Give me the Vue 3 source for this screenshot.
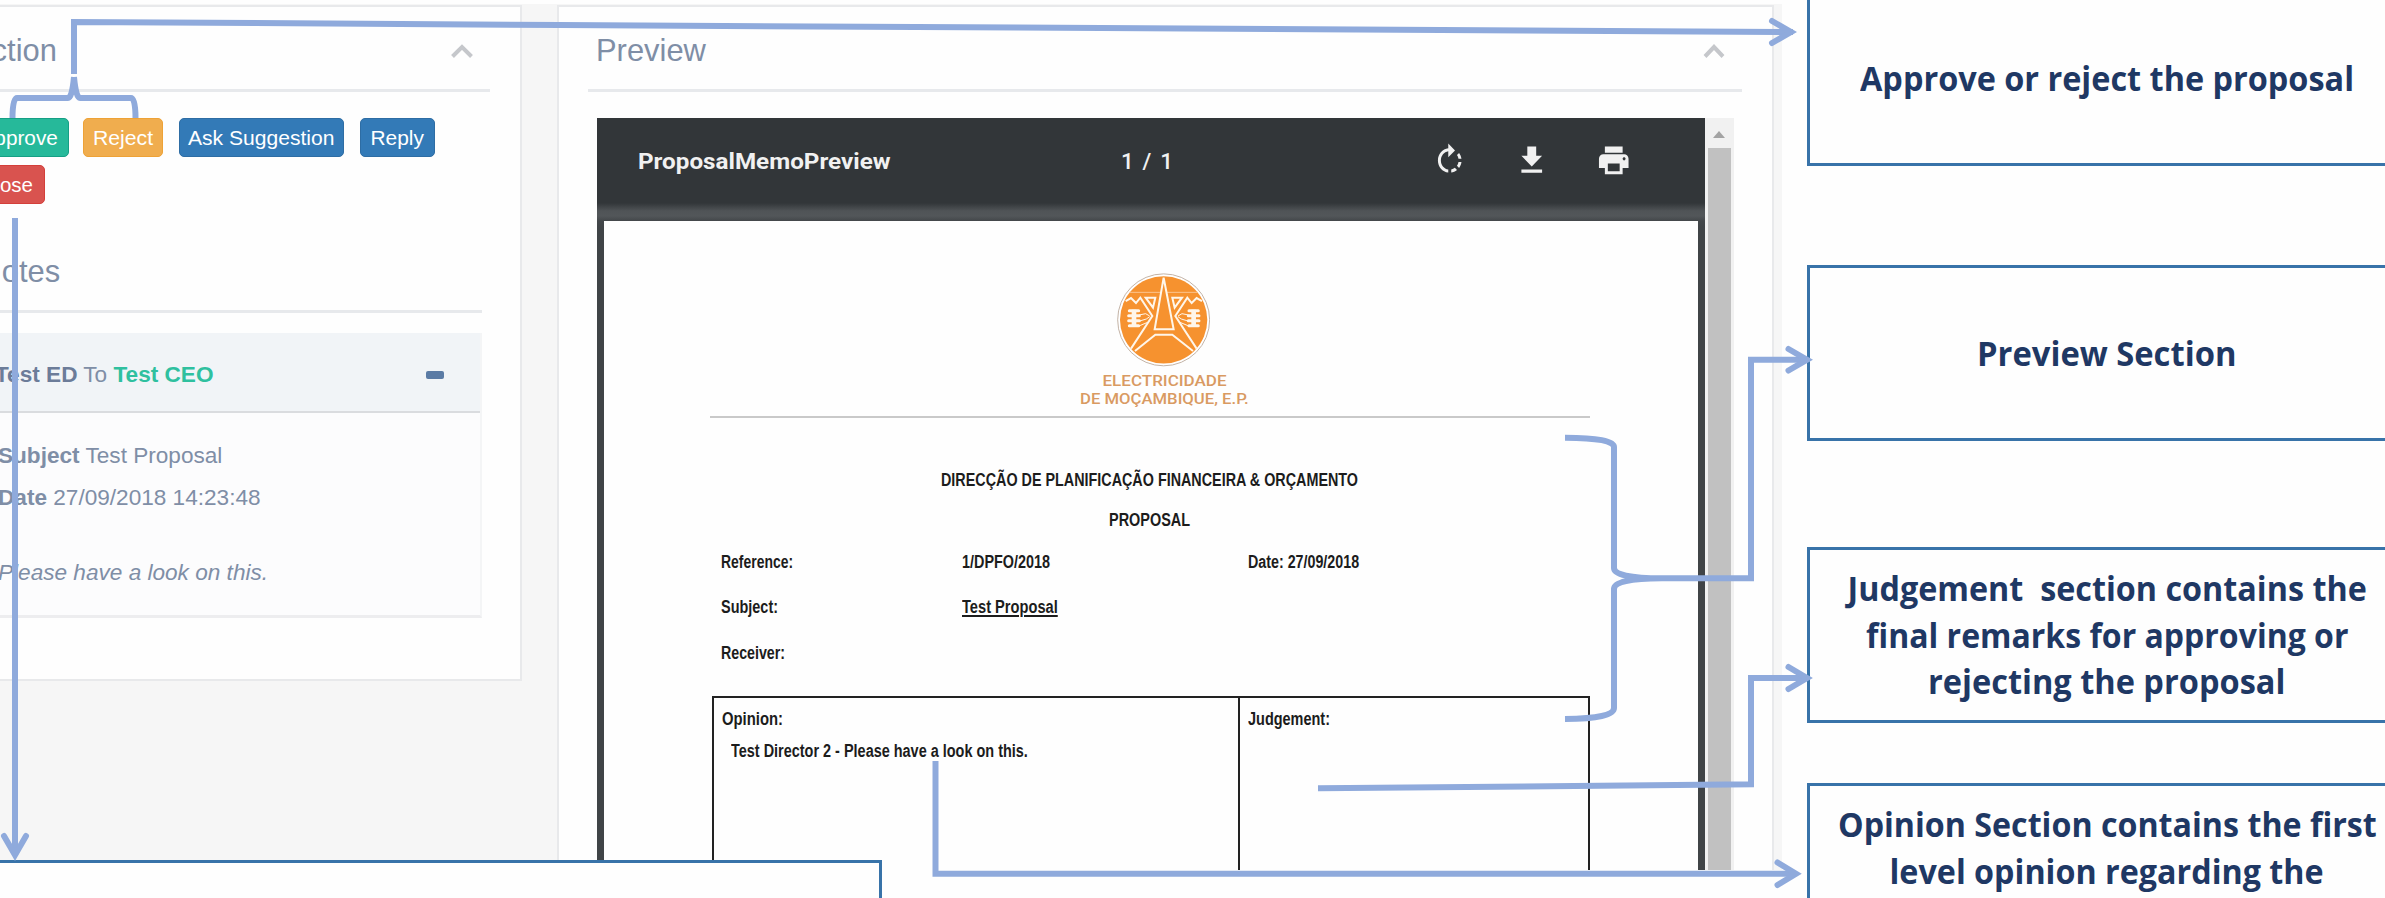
<script setup>
// Stretches or condenses a text run horizontally to the given width.
const vFit = {
  mounted(el, { value }) {
    el.style.transform = `scaleX(${value / el.offsetWidth})`
  },
}

const memoRows = [
  { label: 'Reference:', lw: 72, value: '1/DPFO/2018', vw: 88, extra: 'Date: 27/09/2018', ew: 111 },
  { label: 'Subject:', lw: 57, value: 'Test Proposal', vw: 96, underline: true },
  { label: 'Receiver:', lw: 64 },
]

const callouts = [
  { id: 'approve', lines: [['Approve or reject the proposal', 494]] },
  { id: 'preview', lines: [['Preview Section', 259]] },
  {
    id: 'judgement',
    lines: [
      ['Judgement\u00a0 section contains the', 519],
      ['final remarks for approving or', 482],
      ['rejecting the proposal', 357],
    ],
  },
  {
    id: 'opinion',
    lines: [
      ['Opinion Section contains the first', 539],
      ['level opinion regarding the', 434],
    ],
  },
]
</script>

<template>
  <div class="slide">
    <div class="app">
      <section class="panel side">
        <header class="panel-head">
          <h2 class="action-title">Action</h2>
          <svg class="chev" width="24" height="16" viewBox="0 0 24 16"><path d="M2.500 13.500 12 4l9.500 9.500" /></svg>
        </header>
        <div class="buttons">
          <button class="btn approve"><span v-fit="77">Approve</span></button>
          <button class="btn reject"><span v-fit="60">Reject</span></button>
          <button class="btn ask"><span v-fit="146">Ask Suggestion</span></button>
          <button class="btn reply"><span v-fit="53">Reply</span></button>
        </div>
        <button class="btn close"><span>Close</span></button>
        <h2 class="notes-title">Notes</h2>
        <article class="note">
          <header class="note-head">
            <span class="route"><b>Test ED</b> To <b class="to">Test CEO</b></span>
            <i class="minus"></i>
          </header>
          <div class="note-body">
            <p><b>Subject</b> Test Proposal</p>
            <p><b>Date</b> 27/09/2018 14:23:48</p>
            <p class="remark">Please have a look on this.</p>
          </div>
        </article>
      </section>

      <section class="panel preview">
        <header class="panel-head">
          <h2>Preview</h2>
          <svg class="chev" width="24" height="16" viewBox="0 0 24 16"><path d="M3 13.500 12 4l9 9.500" /></svg>
        </header>
        <div class="viewer">
          <div class="viewer-main">
            <div class="toolbar">
              <span class="file" v-fit="253">ProposalMemoPreview</span>
              <span class="pages">1 / 1</span>
              <div class="tools">
                <svg viewBox="0 0 24 24" preserveAspectRatio="none"><path d="M15.55 5.55L11 1v3.07C7.06 4.56 4 7.92 4 12s3.05 7.44 7 7.93v-2.02c-2.84-.48-5-2.94-5-5.91s2.16-5.43 5-5.91V10l4.55-4.45zM19.93 11c-.17-1.39-.72-2.73-1.62-3.89l-1.42 1.42c.54.75.88 1.6 1.02 2.47h2.02zM13 17.9v2.02c1.39-.17 2.74-.71 3.9-1.61l-1.44-1.44c-.75.54-1.59.89-2.46 1.03zm3.89-2.42l1.42 1.41c.9-1.16 1.45-2.5 1.62-3.89h-2.02c-.14.87-.48 1.72-1.02 2.48z" /></svg>
                <svg viewBox="0 0 24 24" preserveAspectRatio="none"><path d="M19 9h-4V3H9v6H5l7 7 7-7zM5 18v2h14v-2H5z" /></svg>
                <svg viewBox="0 0 24 24" preserveAspectRatio="none"><path d="M19 8H5c-1.66 0-3 1.34-3 3v6h4v4h12v-4h4v-6c0-1.66-1.34-3-3-3zm-3 11H8v-5h8v5zm3-7c-.55 0-1-.45-1-1s.45-1 1-1 1 .45 1 1-.45 1-1 1zm-1-9H6v4h12V3z" /></svg>
              </div>
            </div>
            <div class="page">
              <div class="brand">
                <svg class="logo" viewBox="230 68 280 281">
                  <circle cx="370" cy="208.500" r="138" fill="#fff" stroke="#c3b3a6" stroke-width="3" />
                  <circle cx="370" cy="208.500" r="131" fill="#f6922f" />
                  <path d="M268 126H472" stroke="#fbc48f" stroke-width="3" />
                  <g fill="none" stroke="#fff6ea" stroke-width="6" stroke-linejoin="miter">
                    <path d="M370 82 343 237H400Z" fill="#f6922f" />
                    <path d="M284 302 345 253H396L458 302" />
                    <g v-for="side in ['', 'translate(741 0) scale(-1 1)']" :key="side" :transform="side">
                      <path d="M256 152 272 143 287 158 300 142 336 197 272 295" />
                      <path d="M316 142H345L338 172Z" />
                      <path d="M296 194 316 190 328 197M298 212 318 206 328 199M298 226 322 216" stroke-width="3" />
                      <path d="M267 181H295M265 196H297M265 211H297M267 226H295" stroke-width="9" stroke-linecap="round" />
                      <path d="M281 178V230" stroke-width="14" />
                    </g>
                  </g>
                </svg>
                <span v-fit="124">ELECTRICIDADE</span>
                <span v-fit="169">DE MOÇAMBIQUE, E.P.</span>
              </div>
              <hr class="rule" />
              <div class="memo-title">
                <span v-fit="417">DIRECÇÃO DE PLANIFICAÇÃO FINANCEIRA &amp; ORÇAMENTO</span>
                <span v-fit="81">PROPOSAL</span>
              </div>
              <div v-for="row in memoRows" :key="row.label" class="memo-row">
                <div><span v-fit="row.lw">{{ row.label }}</span></div>
                <div><span v-if="row.value" v-fit="row.vw" :class="{ under: row.underline }">{{ row.value }}</span></div>
                <div><span v-if="row.extra" v-fit="row.ew">{{ row.extra }}</span></div>
              </div>
              <div class="memo-table">
                <div class="cell">
                  <div><span v-fit="61">Opinion:</span></div>
                  <div class="entry"><span v-fit="297">Test Director 2 - Please have a look on this.</span></div>
                </div>
                <div class="cell">
                  <div><span v-fit="82">Judgement:</span></div>
                </div>
              </div>
            </div>
          </div>
          <div class="scroll">
            <i class="up"></i>
            <div class="thumb"></div>
          </div>
        </div>
      </section>
    </div>

    <aside class="callouts">
      <div v-for="c in callouts" :key="c.id" class="callout" :class="c.id">
        <span v-for="line in c.lines" :key="line[0]" v-fit="line[1]">{{ line[0] }}</span>
      </div>
    </aside>

    <div class="lower-box"></div>

    <svg class="connectors" width="2385" height="898" viewBox="0 0 2385 898">
      <!-- approve / reject -->
      <path d="M74 74V22L560 25 1793 32" />
      <path d="M12.500 118Q12.500 98 17 98H68Q72 98 74 77" />
      <path d="M135.500 118Q135.500 98 131 98H80Q76 98 74 77" />
      <path class="head" d="M1772 21 1791 32 1772 43" />
      <!-- close -->
      <path d="M15 218V852" />
      <path class="head" d="M4 836 15 855 26 836" />
      <!-- preview bracket -->
      <path d="M1565 437.700Q1614 438 1614 447V568Q1614 578 1662 578.300Q1614 578.600 1614 589V708Q1614 718.500 1565 719" />
      <path d="M1662 578.300H1751V359.700H1806" />
      <path class="head" d="M1788.500 349 1807 359.700 1788.500 370.500" />
      <!-- judgement -->
      <path d="M1318 788.300 1751 784.300V678H1806" />
      <path class="head" d="M1788.500 667 1807 678 1788.500 689" />
      <!-- opinion -->
      <path d="M935.500 761V873.700H1795" />
      <path class="head" d="M1777.500 862.500 1796 873.700 1777.500 885" />
    </svg>
  </div>
</template>

<style>
body {
  margin: 0;
  overflow: hidden;
}
</style>

<style scoped>
.slide {
  position: relative;
  display: flex;
  width: 2385px;
  height: 898px;
  overflow: hidden;
  background: #fefefe;
  font-family: "Liberation Sans", Arial, sans-serif;
  color: #7f8ea6;
}
.slide * {
  box-sizing: border-box;
}
.slide span {
  white-space: nowrap;
}
h2,
p {
  margin: 0;
  font-weight: 400;
}
.app {
  display: flex;
  align-items: flex-start;
  gap: 35px;
  flex: none;
  width: 1782px;
  height: 866px;
  margin-top: 4px;
  padding-top: 1px;
  overflow: hidden;
  background: #f6f6f6;
}
.panel {
  flex: none;
  border: 2px solid #e8e9eb;
  background: #fefefe;
}
.side {
  width: 522px;
  height: 676px;
  border-left: 0;
}
.preview {
  width: 1217px;
  height: 900px;
}
.panel-head {
  display: flex;
  align-items: center;
  justify-content: space-between;
  height: 85px;
  margin-right: 30px;
  padding: 6px 16px 0 0;
  border-bottom: 3px solid #e7e9ec;
}
.preview .panel-head {
  margin: 0 30px 0 29px;
  padding-left: 8px;
}
.panel-head h2,
.notes-title {
  font-size: 30.900px;
  line-height: 36px;
}
.action-title {
  margin-left: -29px;
}
.chev {
  margin-top: -1px;
  fill: none;
  stroke: #c5c7cb;
  stroke-width: 4;
}
.buttons {
  display: flex;
  gap: 16px;
  margin: 26px 0 0 -30px;
}
.btn {
  display: flex;
  align-items: center;
  justify-content: center;
  height: 39px;
  padding: 1px 0 0;
  border: 1px solid #2e6da4;
  border-radius: 5px;
  background: #337ab7;
  color: #fff;
  font: 20.500px "Liberation Sans", Arial, sans-serif;
}
.approve {
  width: 99px;
  margin-right: -2px;
  border-color: #169f85;
  background: #26b99a;
}
.reject {
  width: 80px;
  border-color: #eea236;
  background: #f0ad4e;
}
.ask {
  width: 165px;
}
.reply {
  width: 75px;
}
.close {
  width: 75.500px;
  margin: 8px 0 0 -31px;
  border-color: #d43f3a;
  background: #d9534f;
}
.notes-title {
  height: 109px;
  margin: 0 38px 0 0;
  padding-top: 50px;
  border-bottom: 3px solid #e7e9ec;
  text-indent: -20.500px;
}
.note {
  width: 482px;
  margin-top: 20px;
  border-right: 2px solid #f4f5f6;
  border-bottom: 3px solid #ededef;
  background: #fcfcfd;
  font-size: 22.600px;
}
.note-head {
  display: flex;
  align-items: center;
  justify-content: space-between;
  height: 80px;
  padding: 6px 36px 0 0;
  border-bottom: 2px solid #dadcdf;
  background: #f1f4f7;
}
.route {
  margin-left: -5px;
}
.route b {
  color: #6c7c99;
}
.route .to {
  color: #2fc09f;
}
.minus {
  width: 18px;
  height: 8px;
  border-radius: 2px;
  background: #5b7ba5;
}
.note-body {
  height: 202px;
  padding-top: 22px;
}
.note-body p {
  margin-left: -2px;
  line-height: 41.700px;
}
.note-body .remark {
  margin-top: 34px;
  font-style: italic;
}
.viewer {
  display: flex;
  width: 1136.500px;
  height: 760px;
  margin: 26px 0 0 38px;
}
.viewer-main {
  width: 1107.500px;
  overflow: hidden;
  background: linear-gradient(#323639 85px, #505457 93px, #525659 98px, #43474a 103px, #404447 110px);
}
.toolbar {
  display: flex;
  align-items: center;
  height: 85px;
  padding-left: 41px;
  color: #f1f1f1;
  font-family: Roboto, sans-serif;
  font-size: 22.500px;
  font-weight: 500;
}
.file {
  margin-top: 1px;
  font-weight: 700;
  transform-origin: left;
}
.pages {
  flex: none;
  width: 54px;
  margin-left: auto;
  margin-right: 257px;
  letter-spacing: 1.600px;
}
.tools {
  display: flex;
  gap: 46.500px;
  margin-right: 73px;
}
.tools svg {
  width: 35.500px;
  height: 36.800px;
  fill: #f1f1f1;
}
.page {
  height: 660px;
  margin: 18px 7px 0 6.500px;
  padding: 52px 108px 0 106.500px;
  background: #fefefe;
  color: #1c1c1c;
  font-size: 18px;
  font-weight: 700;
}
.brand {
  display: flex;
  flex-direction: column;
  align-items: center;
  padding-left: 30px;
  color: #d99a62;
  font: 500 15.500px/18px Roboto, sans-serif;
}
.logo {
  width: 93.300px;
  height: 93.700px;
  margin: 0 3px 5px 0;
}
.rule {
  height: 2px;
  margin: 8px 0 42px;
  border: 0;
  background: #c9c9c9;
}
.memo-title {
  display: flex;
  flex-direction: column;
  align-items: center;
  line-height: 40px;
}
.memo-row {
  display: grid;
  grid-template-columns: 241px 286px 1fr;
  height: 45.500px;
  padding-left: 11px;
  line-height: 45.500px;
}
.memo-row span,
.cell span {
  display: inline-block;
  transform-origin: left;
}
.under {
  text-decoration: underline;
  text-decoration-thickness: 2px;
  text-underline-offset: 2px;
}
.memo-table {
  display: grid;
  grid-template-columns: 523.500px 1fr;
  height: 220px;
  margin: 20px 0 0 2px;
  border: 2px solid #222;
}
.cell {
  padding: 6px 0 0 8px;
  line-height: 31.500px;
}
.cell + .cell {
  border-left: 2px solid #222;
}
.entry {
  padding-left: 9px;
}
.scroll {
  width: 29px;
  background: #f1f1f1;
}
.up {
  display: block;
  width: 0;
  height: 0;
  margin: 13px 0 10px 8px;
  border: 6.500px solid transparent;
  border-top: 0;
  border-bottom: 7px solid #a3a3a3;
}
.thumb {
  width: 23px;
  height: 760px;
  margin-left: 3px;
  background: #c1c1c1;
}
.callouts {
  flex: none;
  width: 600px;
  margin: -10px 0 0 25px;
}
.callout {
  display: flex;
  flex-direction: column;
  align-items: center;
  justify-content: center;
  height: 176px;
  border: 3px solid #3873a9;
  background: #fefefe;
  color: #1f3864;
  font: 700 34px/46.700px "Open Sans", sans-serif;
}
.callout.preview {
  width: auto;
  margin-top: 99px;
}
.callout.approve {
  width: auto;
  margin: 0;
}
.callout.judgement {
  margin-top: 106px;
}
.callout.opinion {
  justify-content: flex-start;
  margin-top: 60px;
  padding-top: 15px;
}
.lower-box {
  position: absolute;
  left: -20px;
  top: 860px;
  width: 902px;
  height: 60px;
  border: 3px solid #3873a9;
  background: #fefefe;
}
.connectors {
  position: absolute;
  left: 0;
  top: 0;
  fill: none;
  stroke: #8faadc;
  stroke-width: 6;
}
.head {
  stroke-linecap: round;
}
</style>
